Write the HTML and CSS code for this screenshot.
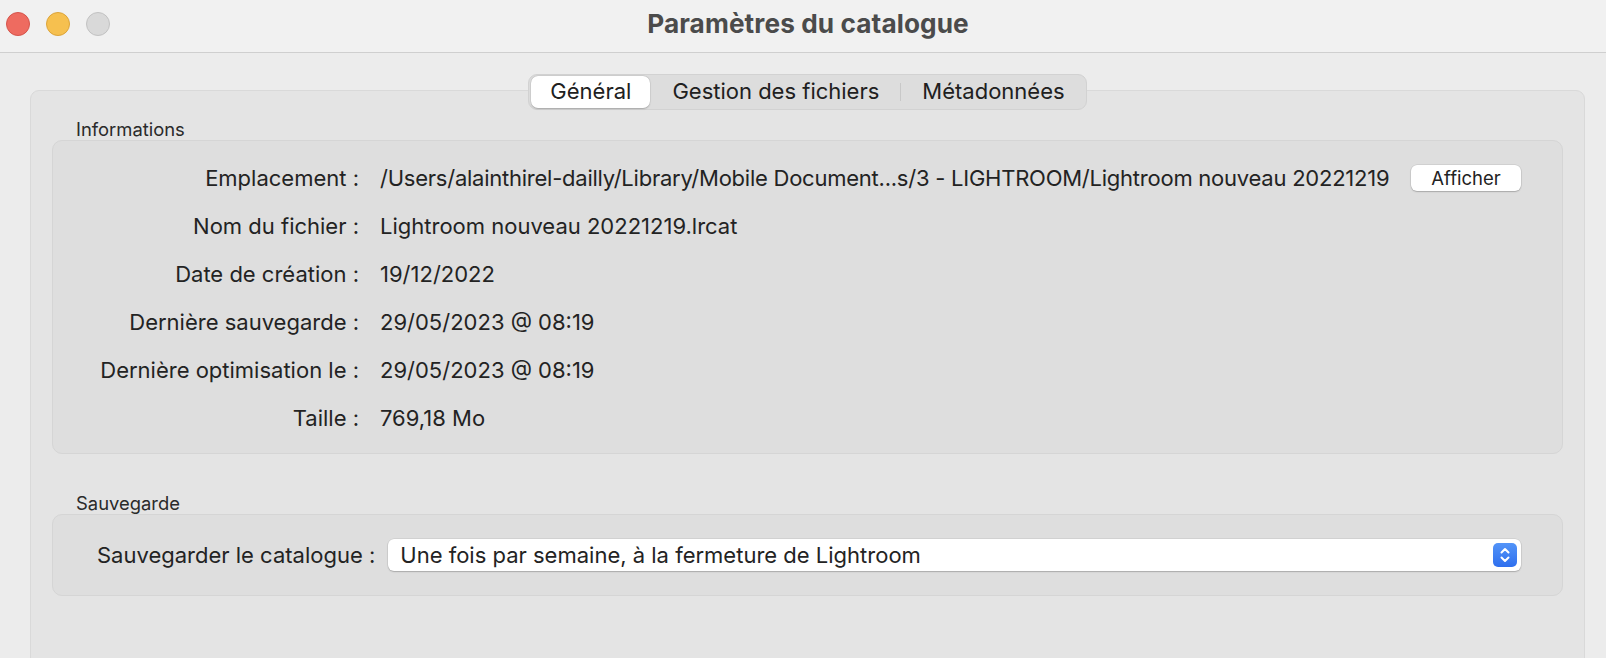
FILE: index.html
```html
<!DOCTYPE html>
<html lang="fr">
<head>
<meta charset="utf-8">
<title>Paramètres du catalogue</title>
<link rel="stylesheet" href="styles.css">
</head>
<body>
<div class="window">
  <header class="titlebar">
    <div class="lights">
      <span class="light red"></span>
      <span class="light yellow"></span>
      <span class="light gray"></span>
    </div>
    <h1 class="title">Paramètres du catalogue</h1>
    <div></div>
  </header>
  <main class="content">
    <nav class="tabs">
      <span class="tab active">Général</span>
      <span class="tab">Gestion des fichiers</span>
      <span class="sep"></span>
      <span class="tab">Métadonnées</span>
    </nav>
    <section class="panel">
      <div class="group-label">Informations</div>
      <div class="box info">
        <span class="label">Emplacement&nbsp;:</span>
        <span class="value path"><span class="path-text">/Users/alainthirel-dailly/Library/Mobile Document...s/3 - LIGHTROOM/Lightroom nouveau 20221219</span><button class="btn">Afficher</button></span>
        <span class="label">Nom du fichier&nbsp;:</span>
        <span class="value">Lightroom nouveau 20221219.lrcat</span>
        <span class="label">Date de création&nbsp;:</span>
        <span class="value">19/12/2022</span>
        <span class="label">Dernière sauvegarde&nbsp;:</span>
        <span class="value">29/05/2023 @ 08:19</span>
        <span class="label">Dernière optimisation le&nbsp;:</span>
        <span class="value">29/05/2023 @ 08:19</span>
        <span class="label">Taille&nbsp;:</span>
        <span class="value">769,18 Mo</span>
      </div>
      <div class="group-label second">Sauvegarde</div>
      <div class="box backup">
        <span class="label">Sauvegarder le catalogue&nbsp;:</span>
        <div class="popup">
          <span>Une fois par semaine, à la fermeture de Lightroom</span>
          <span class="stepper">
            <svg width="24" height="24" viewBox="0 0 24 24">
              <path d="M8.5 9.5 L12 6 L15.5 9.5" fill="none" stroke="#fff" stroke-width="2" stroke-linecap="round" stroke-linejoin="round"/>
              <path d="M8.5 14.5 L12 18 L15.5 14.5" fill="none" stroke="#fff" stroke-width="2" stroke-linecap="round" stroke-linejoin="round"/>
            </svg>
          </span>
        </div>
      </div>
    </section>
  </main>
</div>
</body>
</html>
```

FILE: styles.css
```css
html, body {
  margin: 0;
  padding: 0;
  height: 100%;
  overflow: hidden;
  background: #ececec;
}

body {
  font-family: Inter, "Noto Sans", "DejaVu Sans", sans-serif;
  color: #232323;
}

.window {
  width: 1606px;
  height: 658px;
  overflow: hidden;
}

.titlebar {
  height: 52px;
  background: #f1f1f1;
  border-bottom: 1px solid #cfcfcf;
  display: grid;
  grid-template-columns: 1fr auto 1fr;
  align-items: center;
  padding-left: 6px;
  padding-right: 0;
  box-sizing: content-box;
}

.lights {
  display: flex;
  gap: 16px;
  align-items: center;
  padding-left: 0;
  margin-top: -4px;
}

.light {
  width: 22px;
  height: 22px;
  border-radius: 50%;
  border: 1px solid transparent;
}

.light.red { background: #ee6b60; border-color: #d5544b; }
.light.yellow { background: #f6c04f; border-color: #dca43a; }
.light.gray { background: #d9d9d9; border-color: #c2c2c2; }

.title {
  margin: 0;
  font-size: 26.2px;
  font-weight: 700;
  color: #4b4b4b;
  letter-spacing: 0.1px;
  margin-top: -6px;
  padding-left: 4px;
}

.content {
  padding: 21px 21px 0 30px;
}

.tabs {
  position: relative;
  z-index: 1;
  display: flex;
  align-items: center;
  width: fit-content;
  margin: 0 auto;
  height: 32px;
  padding: 1px 2px;
  background: #dddddd;
  border: 0.5px solid #d2d2d2;
  border-radius: 9px;
  font-size: 22px;
  color: #202020;
}

.tab {
  height: 32px;
  line-height: 31px;
  padding: 0 19px;
  border-radius: 7px;
}

.tab.active {
  background: #ffffff;
  box-shadow: 0 0.5px 1.5px rgba(0, 0, 0, 0.22), 0 0 0 0.5px rgba(0, 0, 0, 0.06);
}

.tab + .tab { margin-left: 3px; }

.sep {
  width: 1px;
  height: 18px;
  background: #c8c8c8;
  margin: 0 2px;
}

.panel {
  margin-top: -20px;
  background: #e4e4e4;
  border: 1px solid #d9d9d9;
  border-radius: 9px;
  padding: 27px 21px 120px 21px;
}

.group-label {
  font-size: 18.4px;
  line-height: 22px;
  height: 22px;
  padding-left: 24px;
  color: #2a2a2a;
}

.group-label.second {
  margin-top: 38px;
}

.box {
  background: #dedede;
  border: 1px solid #d5d5d5;
  border-radius: 10px;
}

.info {
  display: grid;
  grid-template-columns: 306px 1fr;
  column-gap: 21px;
  grid-auto-rows: 48px;
  align-items: center;
  padding: 13px 41px 11px 0;
  font-size: 22px;
}

.label {
  text-align: right;
  white-space: nowrap;
}

.value {
  white-space: nowrap;
}

.path {
  display: flex;
  align-items: center;
}

.path-text {
  letter-spacing: -0.24px;
}

.btn {
  margin-left: auto;
  width: 110px;
  height: 26px;
  border: 0;
  border-radius: 6px;
  background: #ffffff;
  font-family: inherit;
  font-size: 18.5px;
  color: #222;
  padding: 0;
  box-shadow: 0 0 0 0.5px rgba(0, 0, 0, 0.12), 0 1px 1.5px rgba(0, 0, 0, 0.2);
}

.backup {
  display: flex;
  align-items: center;
  gap: 13px;
  padding: 24px 41px 24px 44px;
  font-size: 22px;
}

.popup {
  flex: 1;
  height: 32px;
  display: flex;
  align-items: center;
  justify-content: space-between;
  background: #ffffff;
  border-radius: 6px;
  padding: 0 4px 0 12px;
  font-size: 22px;
  box-shadow: 0 0 0 0.5px rgba(0, 0, 0, 0.1), 0 1px 1.5px rgba(0, 0, 0, 0.2);
}

.stepper {
  width: 24px;
  height: 24px;
  border-radius: 5px;
  background: linear-gradient(#5394f8, #2f6fee);
  display: flex;
}
```
